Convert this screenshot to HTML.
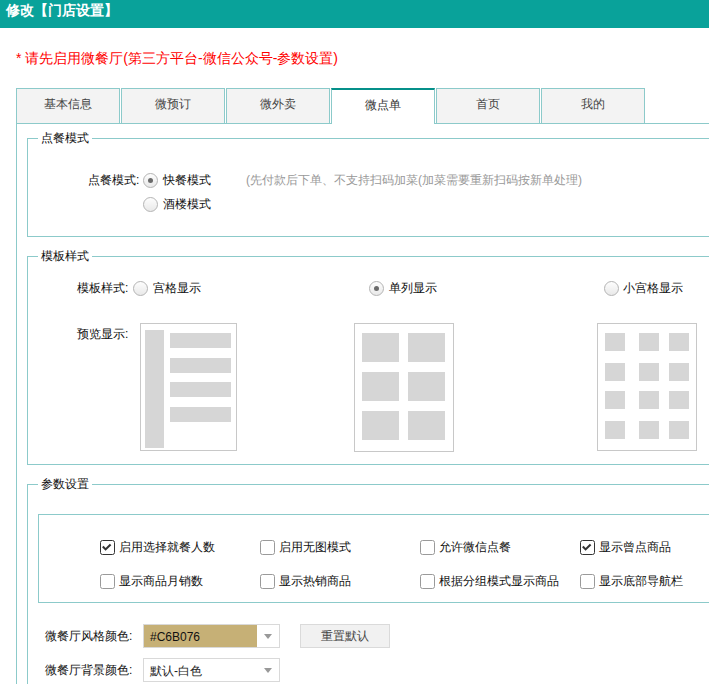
<!DOCTYPE html>
<html><head><meta charset="utf-8">
<style>
*{box-sizing:border-box;margin:0;padding:0}
html,body{width:713px;height:684px;overflow:hidden;background:#fff}
body{position:relative;font-family:"Liberation Sans",sans-serif;font-size:12px;color:#111}
.a{position:absolute;white-space:nowrap;line-height:16px}
#hdr{position:absolute;left:0;top:0;width:709px;height:28px;background:#09a29a}
#hdr span{position:absolute;left:6px;top:1px;font-size:14px;font-weight:bold;color:#fff;line-height:18px}
.red{color:#f00;font-size:14px;line-height:18px}
.tab{position:absolute;top:88px;width:104px;height:36px;background:#f3f3f3;border:1px solid #8ccaca;color:#444;text-align:center;line-height:31px;font-size:12px}
.tab.on{background:#fff;border-top:2px solid #05908a;border-bottom:none;color:#333;line-height:31px}
.hl{position:absolute;height:1px;background:#8ccaca}
.vl{position:absolute;width:1px;background:#8ccaca}
.prev{position:absolute;border:1px solid #c8c8c8;background:#fff}
.g{position:absolute;background:#d6d6d6}
.radio{position:absolute;width:15px;height:15px;border-radius:50%;border:1px solid #b4b4b4;background:linear-gradient(#fdfdfd,#e9e9e9)}
.radio.on::after{content:"";position:absolute;left:4px;top:4px;width:5px;height:5px;border-radius:50%;background:#6a6a6a}
.cb{position:absolute;width:15px;height:15px;border-radius:2.5px;border:1px solid #9a9a9a;background:#fff}
.cb.on{border:1.5px solid #333;background:#fff}
.cb svg{position:absolute;left:0;top:0}
.sel{position:absolute;height:24px;width:137px;border:1px solid #d9d9d9;background:#fff}
.arr{position:absolute;width:0;height:0;border-left:4px solid transparent;border-right:4px solid transparent;border-top:5px solid #999}
.btn{position:absolute;border:1px solid #dadada;background:#f1f1f1;color:#444;text-align:center}
</style></head><body>
<div id="hdr"><span>修改【门店设置】</span></div>
<div class="a red" style="left:16px;top:49px">* 请先启用微餐厅(第三方平台-微信公众号-参数设置)</div>

<!-- tabs -->
<div class="tab" style="left:16px">基本信息</div>
<div class="tab" style="left:121px">微预订</div>
<div class="tab" style="left:226px">微外卖</div>
<div class="hl" style="left:16px;top:123px;width:693px"></div>
<div class="tab on" style="left:331px">微点单</div>
<div class="tab" style="left:436px">首页</div>
<div class="tab" style="left:541px">我的</div>
<div class="vl" style="left:16px;top:123px;height:561px"></div>

<!-- fieldset 1 -->
<div class="hl" style="left:27px;top:138px;width:11px"></div>
<div class="hl" style="left:92px;top:138px;width:617px"></div>
<div class="vl" style="left:27px;top:138px;height:99px"></div>
<div class="hl" style="left:27px;top:236px;width:682px"></div>
<div class="a" style="left:41px;top:130px">点餐模式</div>
<div class="a" style="left:88px;top:172px">点餐模式:</div>
<div class="radio on" style="left:143px;top:173px"></div>
<div class="a" style="left:162.5px;top:172px">快餐模式</div>
<div class="a" style="left:246px;top:172px;color:#999">(先付款后下单、不支持扫码加菜(加菜需要重新扫码按新单处理)</div>
<div class="radio" style="left:143px;top:197px"></div>
<div class="a" style="left:162.5px;top:196px">酒楼模式</div>

<!-- fieldset 2 -->
<div class="hl" style="left:27px;top:256px;width:11px"></div>
<div class="hl" style="left:92px;top:256px;width:617px"></div>
<div class="vl" style="left:27px;top:256px;height:209px"></div>
<div class="hl" style="left:27px;top:464px;width:682px"></div>
<div class="a" style="left:41px;top:248px">模板样式</div>
<div class="a" style="left:77px;top:280px">模板样式:</div>
<div class="radio" style="left:133px;top:281px"></div>
<div class="a" style="left:153px;top:280px">宫格显示</div>
<div class="radio on" style="left:369px;top:281px"></div>
<div class="a" style="left:388.5px;top:280px">单列显示</div>
<div class="radio" style="left:604px;top:281px"></div>
<div class="a" style="left:623px;top:280px">小宫格显示</div>
<div class="a" style="left:77px;top:326px">预览显示:</div>

<div class="prev" style="left:140px;top:323px;width:97px;height:128px"></div>
<div class="g" style="left:145px;top:330px;width:19px;height:118px"></div>
<div class="g" style="left:170px;top:333px;width:61px;height:15px"></div>
<div class="g" style="left:170px;top:358px;width:61px;height:15px"></div>
<div class="g" style="left:170px;top:382px;width:61px;height:15px"></div>
<div class="g" style="left:170px;top:407px;width:61px;height:15px"></div>

<div class="prev" style="left:354px;top:323px;width:100px;height:129px"></div>
<div class="g" style="left:362px;top:333px;width:37px;height:29px"></div>
<div class="g" style="left:408px;top:333px;width:37px;height:29px"></div>
<div class="g" style="left:362px;top:372px;width:37px;height:29px"></div>
<div class="g" style="left:408px;top:372px;width:37px;height:29px"></div>
<div class="g" style="left:362px;top:411px;width:37px;height:29px"></div>
<div class="g" style="left:408px;top:411px;width:37px;height:29px"></div>

<div class="prev" style="left:597px;top:323px;width:100px;height:128px"></div>
<div class="g" style="left:605px;top:333px;width:20px;height:18px"></div>
<div class="g" style="left:639px;top:333px;width:20px;height:18px"></div>
<div class="g" style="left:669px;top:333px;width:20px;height:18px"></div>
<div class="g" style="left:605px;top:363px;width:20px;height:18px"></div>
<div class="g" style="left:639px;top:363px;width:20px;height:18px"></div>
<div class="g" style="left:669px;top:363px;width:20px;height:18px"></div>
<div class="g" style="left:605px;top:391px;width:20px;height:18px"></div>
<div class="g" style="left:639px;top:391px;width:20px;height:18px"></div>
<div class="g" style="left:669px;top:391px;width:20px;height:18px"></div>
<div class="g" style="left:605px;top:421px;width:20px;height:18px"></div>
<div class="g" style="left:639px;top:421px;width:20px;height:18px"></div>
<div class="g" style="left:669px;top:421px;width:20px;height:18px"></div>

<!-- fieldset 3 -->
<div class="hl" style="left:27px;top:484px;width:11px"></div>
<div class="hl" style="left:92px;top:484px;width:617px"></div>
<div class="vl" style="left:27px;top:484px;height:200px"></div>
<div class="a" style="left:41px;top:476px">参数设置</div>
<div class="hl" style="left:38px;top:514px;width:671px"></div>
<div class="vl" style="left:38px;top:514px;height:89px"></div>
<div class="hl" style="left:38px;top:602px;width:671px"></div>

<div class="cb on" style="left:100px;top:540px"><svg width="13" height="13" viewBox="0 0 13 13"><path d="M1.8 5.6 L4.6 8.4 L9.6 3.6" fill="none" stroke="#333" stroke-width="2.1"/></svg></div>
<div class="a" style="left:119px;top:539px">启用选择就餐人数</div>
<div class="cb" style="left:260px;top:540px"></div>
<div class="a" style="left:279px;top:539px">启用无图模式</div>
<div class="cb" style="left:420px;top:540px"></div>
<div class="a" style="left:439px;top:539px">允许微信点餐</div>
<div class="cb on" style="left:580px;top:540px"><svg width="13" height="13" viewBox="0 0 13 13"><path d="M1.8 5.6 L4.6 8.4 L9.6 3.6" fill="none" stroke="#333" stroke-width="2.1"/></svg></div>
<div class="a" style="left:599px;top:539px">显示曾点商品</div>

<div class="cb" style="left:100px;top:574px"></div>
<div class="a" style="left:119px;top:573px">显示商品月销数</div>
<div class="cb" style="left:260px;top:574px"></div>
<div class="a" style="left:279px;top:573px">显示热销商品</div>
<div class="cb" style="left:420px;top:574px"></div>
<div class="a" style="left:439px;top:573px">根据分组模式显示商品</div>
<div class="cb" style="left:580px;top:574px"></div>
<div class="a" style="left:599px;top:573px">显示底部导航栏</div>

<div class="a" style="left:45px;top:628px">微餐厅风格颜色:</div>
<div class="sel" style="left:143px;top:624px"><div style="position:absolute;left:0;top:0;width:113px;height:22px;background:#c6b076"></div><div class="a" style="left:6px;top:4px;color:#111">#C6B076</div><div class="arr" style="left:120px;top:9px"></div></div>
<div class="btn" style="left:300px;top:624px;width:90px;height:24px;line-height:22px">重置默认</div>
<div class="a" style="left:45px;top:662px">微餐厅背景颜色:</div>
<div class="sel" style="left:143px;top:658px"><div class="a" style="left:6px;top:4px;color:#222">默认-白色</div><div class="arr" style="left:120px;top:9px"></div></div>
</body></html>
